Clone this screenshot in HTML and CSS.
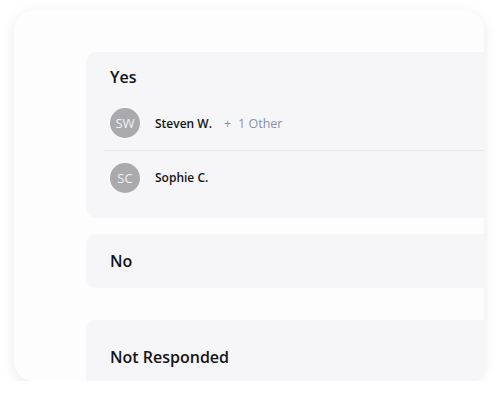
FILE: index.html
```html
<!DOCTYPE html>
<html>
<head>
<meta charset="utf-8">
<link rel="stylesheet" href="styles.css">
</head>
<body>
<div class="card">
  <div class="panels">
    <section class="panel panel-yes">
      <h2 class="title">Yes</h2>
      <ul class="list">
        <li class="row">
          <span class="avatar">SW</span>
          <span class="name">Steven W.</span>
          <span class="more"><span class="plus">+</span>1 Other</span>
        </li>
        <li class="row row-divided">
          <span class="avatar">SC</span>
          <span class="name">Sophie C.</span>
        </li>
      </ul>
    </section>
    <section class="panel panel-no">
      <h2 class="title">No</h2>
    </section>
    <section class="panel panel-nr">
      <h2 class="title">Not Responded</h2>
    </section>
  </div>
</div>
</body>
</html>
```
FILE: styles.css
```css
html, body {
  margin: 0;
  padding: 0;
  background: #ffffff;
}
body {
  font-family: "Open Sans", "Noto Sans", sans-serif;
  color: #141416;
  padding: 10px 0 0 14px;
}
.card {
  width: 470px;
  height: 371px;
  box-sizing: border-box;
  border-radius: 20px;
  background: #fdfdfe;
  box-shadow: 0 3px 14px rgba(20, 20, 40, 0.09);
  overflow: hidden;
  padding: 42px 0 0 72px;
}
.panels {
  display: flex;
  flex-direction: column;
  width: 470px;
}
.panel {
  background: #f6f5f8;
  border-radius: 10px;
}
.title {
  margin: 0;
  font-size: 16px;
  line-height: 24px;
  font-weight: 600;
}
.panel-yes {
  padding: 13px 0 14px 18px;
}
.panel-yes .title {
  padding-left: 6px;
}
.list {
  list-style: none;
  margin: 7px 0 0 0;
  padding: 0;
}
.row {
  display: flex;
  align-items: center;
  height: 54px;
  padding-left: 6px;
  box-sizing: border-box;
  font-size: 12px;
}
.row-divided {
  border-top: 1px solid #e7e6ea;
}
.avatar {
  width: 30px;
  height: 30px;
  border-radius: 50%;
  background: #aaa9ac;
  color: #f2f2f3;
  font-size: 13px;
  display: flex;
  align-items: center;
  justify-content: center;
  margin-right: 15px;
  flex: none;
}
.name {
  font-weight: 600;
}
.more {
  margin-left: 12px;
  font-size: 12.5px;
  color: #8792a3;
}
.plus {
  margin-right: 7px;
}
.panel-no {
  margin-top: 16px;
  height: 54px;
  display: flex;
  align-items: center;
  padding-left: 24px;
}
.panel-nr {
  margin-top: 32px;
  height: 80px;
  padding: 25px 0 0 24px;
}
```
